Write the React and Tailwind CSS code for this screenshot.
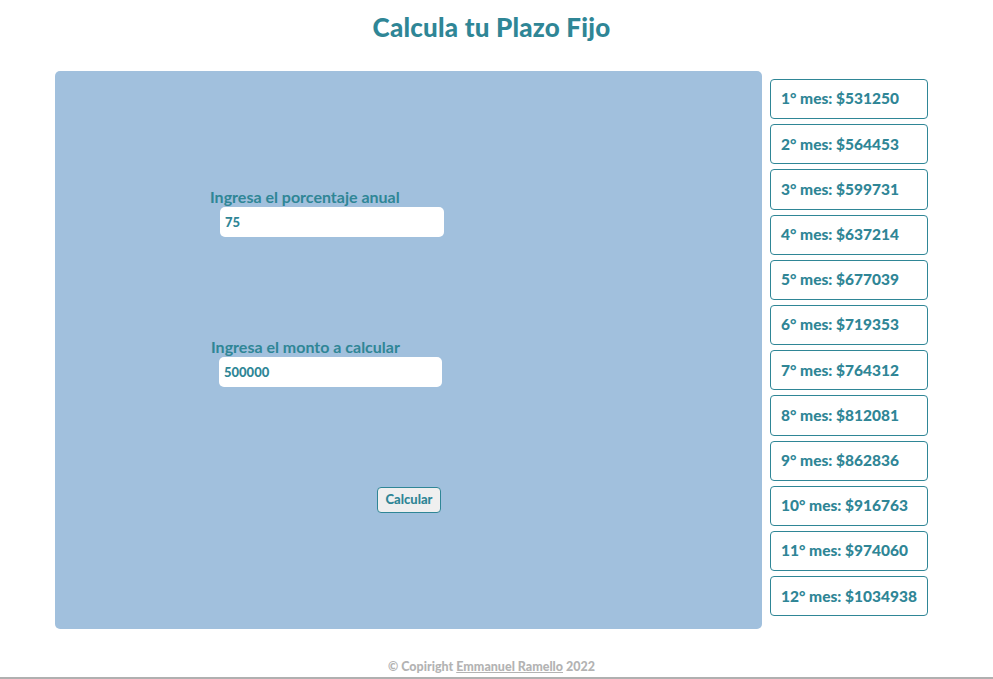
import React from 'react';

const meses = [531250, 564453, 599731, 637214, 677039, 719353, 764312, 812081, 862836, 916763, 974060, 1034938];

const App = () => {
  return (
    <div className="w-[993px] h-[679px] bg-white flex flex-col text-[#2f8696]" style={{ fontFamily: 'Lato, "Open Sans", sans-serif' }}>
      <h1 className="text-center text-[26px] font-black tracking-[0.2px] mt-[9px] h-[36px] leading-[36px] pr-[10px]">Calcula tu Plazo Fijo</h1>

      <div className="flex gap-[8px] ml-[55px] mt-[26px]">
        <div className="w-[707px] h-[558px] bg-[#a1c0dd] rounded-[5px] flex flex-col pl-[155px] pt-[116px]">
          <label className="text-[16px] font-bold leading-[20px]">Ingresa el porcentaje anual</label>
          <input
            className="ml-[10px] w-[224px] h-[30px] bg-white rounded-[5px] px-[5px] text-[13px] font-black text-[#2f8696] outline-none"
            defaultValue="75"
          />
          <label className="text-[16px] font-bold leading-[20px] mt-[100px] ml-[1px]">Ingresa el monto a calcular</label>
          <input
            className="ml-[9px] w-[223px] h-[30px] bg-white rounded-[5px] px-[5px] text-[13px] font-black text-[#2f8696] outline-none"
            defaultValue="500000"
          />
          <button className="self-start ml-[167px] mt-[100px] w-[64px] h-[26px] bg-[#efefef] border border-[#2f8696] rounded-[4px] text-[13px] font-black text-[#2f8696]">
            Calcular
          </button>
        </div>

        <div className="flex flex-col gap-[5px] mt-[8px]">
          {meses.map((m, i) => (
            <div
              key={i}
              className="w-[158px] h-[40.2px] border border-[#2f8696] rounded-[4px] flex items-center pl-[10px] text-[15.5px] font-black"
            >
              {i + 1}° mes: ${m}
            </div>
          ))}
        </div>
      </div>

      <div className="mt-auto text-center text-[12.5px] font-black text-[#b3b3b3] leading-[14px] pb-[3px] pr-[10px]">
        © Copiright <span className="underline">Emmanuel Ramello</span> 2022
      </div>
      <div className="h-[2px] bg-[#b0b0b0]" />
    </div>
  );
};

export default App;
